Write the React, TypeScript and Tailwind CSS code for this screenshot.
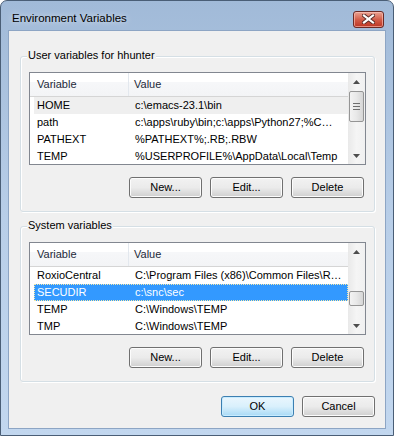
import React from "react";

type EnvVar = { name: string; value: string };

const userVars: EnvVar[] = [
  { name: "HOME", value: "c:\\emacs-23.1\\bin" },
  { name: "path", value: "c:\\apps\\ruby\\bin;c:\\apps\\Python27;%C…" },
  { name: "PATHEXT", value: "%PATHEXT%;.RB;.RBW" },
  { name: "TEMP", value: "%USERPROFILE%\\AppData\\Local\\Temp" },
];

const systemVars: EnvVar[] = [
  { name: "RoxioCentral", value: "C:\\Program Files (x86)\\Common Files\\R…" },
  { name: "SECUDIR", value: "c:\\snc\\sec" },
  { name: "TEMP", value: "C:\\Windows\\TEMP" },
  { name: "TMP", value: "C:\\Windows\\TEMP" },
];

function WinButton({ label, primary }: { label: string; primary?: boolean }) {
  return (
    <button
      className={
        primary
          ? "w-[73px] h-[21px] rounded-[3px] border border-[#3c7fb1] bg-gradient-to-b from-[#eaf6fd] via-[#d9f0fc] to-[#a7d9f5] shadow-[inset_0_0_0_1px_#c8ecff] text-[11px] leading-none text-black"
          : "w-[73px] h-[21px] rounded-[3px] border border-[#707070] bg-gradient-to-b from-[#f2f2f2] via-[#ebebeb] to-[#cfcfcf] shadow-[inset_0_0_0_1px_#fcfcfc] text-[11px] leading-none text-black"
      }
    >
      {label}
    </button>
  );
}

function Arrow({ up }: { up?: boolean }) {
  return (
    <div className="h-[17px] flex items-center justify-center">
      <svg width="7" height="4" viewBox="0 0 7 4">
        {up ? <path d="M0 4 L3.5 0 L7 4 Z" fill="#4d4d4d" /> : <path d="M0 0 L3.5 4 L7 0 Z" fill="#4d4d4d" />}
      </svg>
    </div>
  );
}

function ScrollBar({ thumbClass, grip }: { thumbClass: string; grip?: boolean }) {
  return (
    <div className="w-[17px] flex flex-col bg-gradient-to-r from-[#e9e9e9] via-[#f5f5f5] to-[#f0f0f0]">
      <Arrow up />
      <div className="flex-1 flex flex-col items-center">
        <div
          className={`${thumbClass} w-[15px] rounded-[2px] border border-[#959595] bg-gradient-to-r from-[#f3f3f3] via-[#e8e8e8] to-[#d6d6d6] flex flex-col items-center justify-center gap-[2px]`}
        >
          {grip && (
            <>
              <div className="w-[7px] h-[1px] bg-[#6e6e6e]" />
              <div className="w-[7px] h-[1px] bg-[#6e6e6e]" />
              <div className="w-[7px] h-[1px] bg-[#6e6e6e]" />
            </>
          )}
        </div>
      </div>
      <Arrow />
    </div>
  );
}

function ListView({
  rows,
  selected,
  focused,
  thumbClass,
  grip,
}: {
  rows: EnvVar[];
  selected: number;
  focused?: boolean;
  thumbClass: string;
  grip?: boolean;
}) {
  return (
    <div className="h-[93px] border border-[#828790] bg-white flex overflow-hidden">
      <div className="flex-1 flex flex-col">
        {/* Header */}
        <div className="h-[24px] shrink-0 flex bg-[linear-gradient(to_bottom,#ffffff_0%,#ffffff_40%,#f6f7f9_41%,#f3f4f6_100%)] border-b border-[#d5d5d5] text-[11px] text-[#1e2a3a]">
          <div className="w-[99px] pl-[7px] flex items-center border-r border-[#e3e8ee]">Variable</div>
          <div className="flex-1 pl-[5px] flex items-center">Value</div>
        </div>
        {rows.map((r, i) => {
          const isSel = i === selected;
          const rowClass = isSel
            ? focused
              ? "bg-[#3399ff] text-white outline outline-1 outline-dotted outline-[#f5e9a8] -outline-offset-1"
              : "bg-[#efefef] text-black"
            : "text-black";
          return (
            <div key={r.name} className="h-[17px] shrink-0 pl-[4px]">
              <div className={`h-full flex items-center text-[11px] ${rowClass}`}>
                <div className="w-[95px] pl-[3px] whitespace-nowrap">{r.name}</div>
                <div className="flex-1 pl-[6px] whitespace-nowrap overflow-hidden">{r.value}</div>
              </div>
            </div>
          );
        })}
      </div>
      <ScrollBar thumbClass={thumbClass} grip={grip} />
    </div>
  );
}

function GroupBox({ title, children, className }: { title: string; children: React.ReactNode; className?: string }) {
  return (
    <div
      className={`relative w-[355px] rounded-[3px] border border-[#d5dfe5] shadow-[1px_1px_0_#ffffff,inset_1px_1px_0_#ffffff] px-[8px] pt-[15px] pb-[13px] ${className ?? ""}`}
    >
      <div className="absolute -top-[8px] left-[6px] px-[1px] bg-[#f0f0f0] text-[11px] leading-[13px] text-black">
        {title}
      </div>
      {children}
    </div>
  );
}

export default function App() {
  return (
    <div className="w-[394px] h-[436px] font-['Liberation_Sans',Arial,sans-serif] bg-white">
      <div className="w-full h-full flex flex-col rounded-t-[7px] border border-[#4a5e76] bg-gradient-to-b from-[#a1bad8] via-[#b8cee8] to-[#c2d7ef]">
        {/* Title bar */}
        <div className="h-[29px] shrink-0 flex items-center justify-between pl-[11px] pr-[9px] pt-[7px]">
          <span className="text-[11.5px] text-black [text-shadow:0_0_6px_rgba(255,255,255,0.8)]">
            Environment Variables
          </span>
          <div className="w-[31px] h-[17px] rounded-[3px] border border-[#6b2a25] bg-gradient-to-b from-[#e9a293] via-[#d35e4a] to-[#bb3322] shadow-[inset_0_0_0_1px_rgba(255,200,190,0.6)] flex items-center justify-center">
            <svg width="13" height="10" viewBox="0 0 13 10">
              <path d="M2 1.5 L11 8.5 M11 1.5 L2 8.5" stroke="#5a2a26" strokeWidth="4" strokeLinecap="square" />
              <path d="M2 1.5 L11 8.5 M11 1.5 L2 8.5" stroke="#ffffff" strokeWidth="2.2" strokeLinecap="square" />
            </svg>
          </div>
        </div>

        {/* Client area */}
        <div className="h-[399px] mx-[7px] shrink-0 border border-[#8da5c4] bg-[#f0f0f0] pl-[11px] pt-[25px] flex flex-col">
          <GroupBox title="User variables for hhunter">
            <ListView rows={userVars} selected={0} thumbClass="mt-[1px] h-[31px]" grip />
            <div className="mt-[12px] mr-[2px] flex justify-end gap-[8px]">
              <WinButton label="New..." />
              <WinButton label="Edit..." />
              <WinButton label="Delete" />
            </div>
          </GroupBox>

          <GroupBox title="System variables" className="mt-[14px]">
            <ListView rows={systemVars} selected={1} focused thumbClass="mt-[31px] h-[15px]" />
            <div className="mt-[12px] mr-[2px] flex justify-end gap-[8px]">
              <WinButton label="New..." />
              <WinButton label="Edit..." />
              <WinButton label="Delete" />
            </div>
          </GroupBox>

          <div className="w-[355px] mt-[14px] flex justify-end gap-[8px]">
            <WinButton label="OK" primary />
            <WinButton label="Cancel" />
          </div>
        </div>
      </div>
    </div>
  );
}
